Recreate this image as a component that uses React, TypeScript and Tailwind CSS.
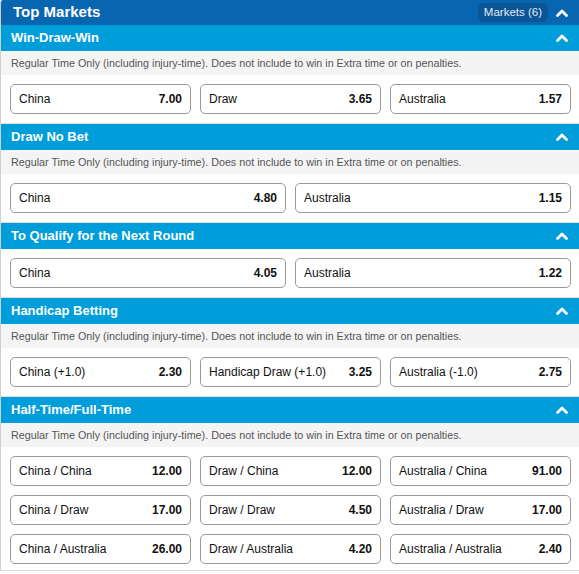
const font = { fontFamily: '"Liberation Sans", Arial, sans-serif' };

type Sel = { label: string; price: string };
type Market = { title: string; note?: boolean; rows: Sel[][] };

const NOTE =
  "Regular Time Only (including injury-time). Does not include to win in Extra time or on penalties.";

const markets: Market[] = [
  {
    title: "Win-Draw-Win",
    note: true,
    rows: [
      [
        { label: "China", price: "7.00" },
        { label: "Draw", price: "3.65" },
        { label: "Australia", price: "1.57" },
      ],
    ],
  },
  {
    title: "Draw No Bet",
    note: true,
    rows: [
      [
        { label: "China", price: "4.80" },
        { label: "Australia", price: "1.15" },
      ],
    ],
  },
  {
    title: "To Qualify for the Next Round",
    rows: [
      [
        { label: "China", price: "4.05" },
        { label: "Australia", price: "1.22" },
      ],
    ],
  },
  {
    title: "Handicap Betting",
    note: true,
    rows: [
      [
        { label: "China (+1.0)", price: "2.30" },
        { label: "Handicap Draw (+1.0)", price: "3.25" },
        { label: "Australia (-1.0)", price: "2.75" },
      ],
    ],
  },
  {
    title: "Half-Time/Full-Time",
    note: true,
    rows: [
      [
        { label: "China / China", price: "12.00" },
        { label: "Draw / China", price: "12.00" },
        { label: "Australia / China", price: "91.00" },
      ],
      [
        { label: "China / Draw", price: "17.00" },
        { label: "Draw / Draw", price: "4.50" },
        { label: "Australia / Draw", price: "17.00" },
      ],
      [
        { label: "China / Australia", price: "26.00" },
        { label: "Draw / Australia", price: "4.20" },
        { label: "Australia / Australia", price: "2.40" },
      ],
    ],
  },
];

function Caret() {
  return (
    <svg width="12" height="8" viewBox="0 0 12 8" className="shrink-0">
      <polyline
        points="1.5,6.5 6,2 10.5,6.5"
        fill="none"
        stroke="white"
        strokeWidth="2.8"
        strokeLinecap="round"
        strokeLinejoin="round"
      />
    </svg>
  );
}

function MarketBlock({ market, last }: { market: Market; last: boolean }) {
  return (
    <section>
      <div className="flex items-center justify-between h-[26px] pl-[10px] pr-[11px] bg-[#009ddb]">
        <span className="text-[13px] font-bold text-white">{market.title}</span>
        <Caret />
      </div>
      {market.note && (
        <div className="h-[24px] flex items-center pl-[10px] bg-[#f4f4f4] text-[10.75px] text-[#555]">
          {NOTE}
        </div>
      )}
      <div
        className={
          "flex flex-col gap-[9px] pt-[9px] pl-[9px] pr-[8px] border-b border-[#dcdcdc] " +
          (last ? "pb-[6px]" : "pb-[9px]")
        }
      >
        {market.rows.map((row, i) => (
          <div
            key={i}
            className={row.length === 3 ? "grid grid-cols-3 gap-[9px]" : "grid grid-cols-2 gap-[9px]"}
          >
            {row.map((s) => (
              <div
                key={s.label}
                className="flex items-center justify-between h-[30px] px-[8px] rounded-[5px] border border-[#9a9a9a] bg-white text-[12px] text-[#111]"
              >
                <span>{s.label}</span>
                <span className="font-bold">{s.price}</span>
              </div>
            ))}
          </div>
        ))}
      </div>
    </section>
  );
}

export default function App() {
  return (
    <div className="w-[579px] h-[574px] bg-white" style={font}>
      <div className="border-l border-[#cfcfcf] rounded-tl-[3px] overflow-hidden">
        <div className="flex items-center justify-between h-[25px] pl-[12px] pr-[11px] bg-[#0866b0]">
          <span className="text-[15px] font-bold text-white">Top Markets</span>
          <div className="flex items-center gap-[8px]">
            <span className="flex items-center h-[19px] px-[6px] rounded-[6px] bg-[#0a5596] text-[11.5px] text-[#e0eaf5]">
              Markets (6)
            </span>
            <Caret />
          </div>
        </div>
        {markets.map((m, i) => (
          <MarketBlock key={m.title} market={m} last={i === markets.length - 1} />
        ))}
      </div>
    </div>
  );
}
